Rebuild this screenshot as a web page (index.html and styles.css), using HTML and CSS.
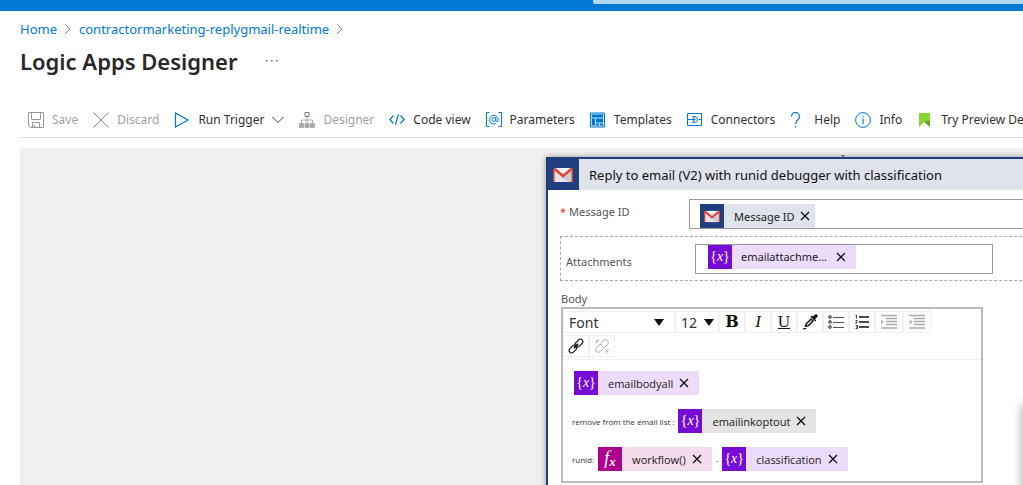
FILE: index.html
```html
<!DOCTYPE html>
<html lang="en">
<head>
  <meta charset="UTF-8">
  <meta name="viewport" content="width=device-width, initial-scale=1">
  <title>Logic Apps Designer</title>
  <link rel="stylesheet" href="styles.css">
</head>
<body>

  <!-- Shared icons -->
  <svg class="defs" aria-hidden="true">
    <symbol id="gmail" viewBox="0 0 20 16">
      <path d="M1 1h18v14H1z" fill="#e6e6e8"/>
      <path d="M10 9l8-7v13h-3l-6-5z" fill="#cdcdd0"/>
      <path d="M2 1h16l-8 7z" fill="#f5f5f5"/>
      <path d="M.8 15V2M19.200 15V2" stroke="#d5453a" stroke-width="1.600"/>
      <path d="M1 1.500l9 7.500 9-7.500" fill="none" stroke="#e0453a" stroke-width="2.600"/>
    </symbol>
    <symbol id="close" viewBox="0 0 10 10">
      <path d="M1 1l8 8M9 1L1 9" fill="none" stroke="#111" stroke-width="1.400"/>
    </symbol>
    <symbol id="chevron" viewBox="0 0 8 12">
      <path d="M1 1l5 5-5 5" fill="none" stroke="#888" stroke-width="1"/>
    </symbol>
  </svg>

  <header class="topbar">
    <input class="topbar-search" type="search" aria-label="Search resources">
  </header>

  <nav class="breadcrumb" aria-label="Breadcrumb">
    <a href="#">Home</a>
    <svg width="8" height="12"><use href="#chevron"/></svg>
    <a href="#">contractormarketing-replygmail-realtime</a>
    <svg width="8" height="12"><use href="#chevron"/></svg>
  </nav>

  <div class="title-row">
    <h1>Logic Apps Designer</h1>
    <button class="more" aria-label="More">
      <svg width="12" height="4" viewBox="0 0 12 4"><path d="M0 1h1.500v1.500H0zM5 1h1.500v1.500H5zM10 1h1.500v1.500H10z" fill="#666"/></svg>
    </button>
  </div>

  <div class="commands" role="toolbar" aria-label="Commands">
    <button disabled>
      <svg class="icon" viewBox="0 0 16 16" fill="none" stroke="#999"><path d="M.5.500h15v15h-13l-2-2zM3.500.500v7h9v-7M4.500 15.500v-5h7v5M6.500 13v2.500"/></svg>
      Save
    </button>
    <button disabled>
      <svg class="icon" viewBox="0 0 16 16" fill="none" stroke="#888"><path d="M.5.500l15 15M15.500.500l-15 15"/></svg>
      Discard
    </button>
    <button>
      <svg class="icon" viewBox="0 0 16 16" fill="none" stroke="#0078d4" stroke-width="1.200"><path d="M1.500 1v14L14 8z"/></svg>
      Run Trigger
      <svg width="12" height="8" viewBox="0 0 12 8" fill="none" stroke="#444"><path d="M.5 1L6 6.500 11.500 1"/></svg>
    </button>
    <button disabled>
      <svg class="icon" viewBox="0 0 16 16" fill="#aaa"><path d="M6 .5h4v4H6z" fill="none" stroke="#777"/><path d="M8 5v6M2.500 11V8h11v3" fill="none" stroke="#aaa"/><rect y="11" width="5" height="5" rx="1"/><rect x="5.500" y="11" width="5" height="5" rx="1"/><rect x="11" y="11" width="5" height="5" rx="1"/></svg>
      Designer
    </button>
    <button>
      <svg class="icon" viewBox="0 0 16 16" fill="none" stroke="#0078d4" stroke-width="1.200"><path d="M4.500 3.500L.800 7.500l3.700 4M11.500 3.500l3.700 4-3.700 4M9.500 2.500l-3 10"/></svg>
      Code view
    </button>
    <button>
      <svg class="icon" viewBox="0 0 16 16" fill="none" stroke="#0078d4"><path d="M3.500.500h-3v14h3M12.500.500h3v14h-3"/><circle cx="7.800" cy="7.500" r="1.900"/><path d="M9.800 5.200v3.300q0 1.200 1 1.200 1.400 0 1.400-2.400A4.300 4.300 0 1 0 10 11.500"/></svg>
      Parameters
    </button>
    <button>
      <svg class="icon" viewBox="0 0 16 16"><path d="M.5 1h14v14H.5z" fill="#c5e0f5" stroke="#0078d4"/><path d="M2 2.500h11v3H2zM2 6.500h3v7H2zM6 6.500h7v4H6zM6 11.500h3v2H6zM10 11.500h3v2h-3z" fill="#0078d4"/></svg>
      Templates
    </button>
    <button>
      <svg class="icon" viewBox="0 0 16 16" fill="none" stroke="#0078d4"><path d="M.5 1.500h14v12H.5zM.500 7.500h8M11.500 7.500h3M5 4.500h2.500a3 3 0 0 1 0 6H5M8 5.500a2 2 0 0 0-2 2 2 2 0 0 0 2 2"/></svg>
      Connectors
    </button>
    <button>
      <svg class="icon" viewBox="0 0 16 16" fill="none" stroke="#0078d4" stroke-width="1.200"><path d="M1.500 4.500a4 4 0 1 1 6.600 3Q5.500 9.500 5.500 12M5.500 14v1.500"/></svg>
      Help
    </button>
    <button>
      <svg class="icon" viewBox="0 0 16 16" fill="none" stroke="#0078d4"><circle cx="8" cy="8" r="7.400"/><path d="M8 6.500v5.500M8 4v1.300" stroke-width="1.200"/></svg>
      Info
    </button>
    <button>
      <svg class="icon" viewBox="0 0 16 16"><path d="M2 1h11v14l-5.500-5L2 15z" fill="#86d633"/><path d="M7.500 10L13 8v7z" fill="#5ea321"/></svg>
      Try Preview Designer
    </button>
  </div>

  <main class="canvas">
    <section class="card">
      <header class="card-header">
        <span class="card-icon"><svg width="20" height="16"><use href="#gmail"/></svg></span>
        <h2>Reply to email (V2) with runid debugger with classification</h2>
      </header>

      <div class="card-body">
        <div class="row">
          <label for="message-id"><span class="required">*</span>Message ID</label>
          <div class="field">
            <span class="token gmail">
              <span class="token-icon"><svg width="16" height="13"><use href="#gmail"/></svg></span>
              Message ID
              <button aria-label="Remove Message ID"><svg width="10" height="10"><use href="#close"/></svg></button>
            </span>
            <input id="message-id" type="text">
          </div>
        </div>

        <div class="row attachments">
          <label for="attachments">Attachments</label>
          <div class="field">
            <span class="token variable wide">
              <span class="token-icon">{<i>x</i>}</span>
              emailattachme...
              <button aria-label="Remove emailattachments"><svg width="10" height="10"><use href="#close"/></svg></button>
            </span>
            <input id="attachments" type="text">
          </div>
        </div>

        <div class="body-label" id="body-label">Body</div>
        <div class="editor">
          <div class="editor-tools" role="toolbar" aria-label="Formatting">
            <span class="select font-select">
              <select aria-label="Font"><option>Font</option></select>
            </span>
            <span class="select size-select">
              <select aria-label="Font size"><option>12</option></select>
            </span>
            <button class="bold" aria-label="Bold">B</button>
            <button class="italic" aria-label="Italic">I</button>
            <button class="underline" aria-label="Underline">U</button>
            <button aria-label="Text color">
              <svg class="icon" viewBox="0 0 16 16"><path d="M.5 15.500l1-1.500h3l-.5 1zM2.500 13l1-3.500L9 4l3 3-5.500 5.500zM8.500 2.500l1-1 1.500 1 2-2q1.500-.8 2.300.2t-.2 2.300l-2 2 1 1.500-1 1z" fill="#111"/><path d="M5 11l4.500-4.500" stroke="#fff" stroke-width="1.200"/></svg>
            </button>
            <button aria-label="Bulleted list">
              <svg class="icon" viewBox="0 0 16 16" fill="none" stroke="#222"><circle cx="2" cy="3" r="1.300"/><circle cx="2" cy="8" r="1.300"/><circle cx="2" cy="13" r="1.300"/><path d="M5 3.500h11M5 8.500h11M5 13.500h11" stroke="#555"/></svg>
            </button>
            <button aria-label="Numbered list">
              <svg class="icon" viewBox="0 0 16 16" fill="none" stroke="#111"><path d="M2.500 1v3.500M1.500 1.500h1M1.500 6.500h1.500v1.200L1.500 9h2M1.500 11.500h2v3h-2M2 13h1.500" stroke-width=".8"/><path d="M5 3h10M5 8h10M5 13h10" stroke-width="1.500"/></svg>
            </button>
            <button class="indent" disabled aria-label="Indent">
              <svg class="icon wide-icon" viewBox="0 0 18 16" fill="none" stroke="#aaa"><path d="M1 1.500h16M6 4.500h11M6 7.500h11M6 10.500h11M1 14h16" stroke-width="1.300"/><path d="M1 5.500l2.500 2.500L1 10.500z" fill="#aaa" stroke="none"/></svg>
            </button>
            <button class="indent" disabled aria-label="Outdent">
              <svg class="icon wide-icon" viewBox="0 0 18 16" fill="none" stroke="#aaa"><path d="M1 1.500h16M6 4.500h11M6 7.500h11M6 10.500h11M1 14h16" stroke-width="1.300"/><path d="M3.500 5.500L1 8l2.500 2.500z" fill="#aaa" stroke="none"/></svg>
            </button>
            <button aria-label="Link">
              <svg class="icon" viewBox="0 0 16 16" fill="none" stroke="#111" stroke-width="1.200"><rect x="-4.500" y="-2.500" width="9" height="5" rx="2.500" transform="translate(11 5) rotate(-45)"/><rect x="-4.500" y="-2.500" width="9" height="5" rx="2.500" transform="translate(5 11) rotate(-45)"/><path d="M6 10l4-4" stroke-width="1.800"/></svg>
            </button>
            <button disabled aria-label="Remove link">
              <svg class="icon" viewBox="0 0 16 16" fill="none" stroke="#aaa"><path d="M7 5l2.500-2.500a2.500 2.500 0 0 1 4 4L11 9a2.500 2.500 0 0 1-3 0M9 11l-2.500 2.500a2.500 2.500 0 0 1-4-4L5 7a2.500 2.500 0 0 1 3 0M1 4l2 1M4 1l1 2M2 2l2 2M12 13l1 2M13 11l2 1M12 12l2 2"/></svg>
            </button>
          </div>

          <div class="editor-content" contenteditable="true" role="textbox" aria-labelledby="body-label" spellcheck="false">
            <p>
              <span class="token variable">
                <span class="token-icon">{<i>x</i>}</span>
                emailbodyall
                <button aria-label="Remove emailbodyall"><svg width="10" height="10"><use href="#close"/></svg></button>
              </span>
            </p>
            <p>
              remove from the email list :
              <span class="token variable muted">
                <span class="token-icon">{<i>x</i>}</span>
                emailinkoptout
                <button aria-label="Remove emailinkoptout"><svg width="10" height="10"><use href="#close"/></svg></button>
              </span>
            </p>
            <p>
              runid:
              <span class="token function">
                <span class="token-icon"><i>f<sub>x</sub></i></span>
                workflow()
                <button aria-label="Remove workflow()"><svg width="10" height="10"><use href="#close"/></svg></button>
              </span>
              -
              <span class="token variable">
                <span class="token-icon">{<i>x</i>}</span>
                classification
                <button aria-label="Remove classification"><svg width="10" height="10"><use href="#close"/></svg></button>
              </span>
            </p>
          </div>
        </div>
      </div>
    </section>
  </main>

  <aside class="zoom-panel"></aside>

</body>
</html>
```
FILE: styles.css
```css
* { box-sizing: border-box; margin: 0; padding: 0; }

body {
  height: 100vh;
  display: flex;
  flex-direction: column;
  overflow: hidden;
  background: #fff;
  color: #323130;
  font-family: "Noto Sans", "Open Sans", sans-serif;
  font-size: 12px;
}

button,
input,
select {
  font: inherit;
  color: inherit;
  background: none;
  border: none;
  outline: none;
}
svg { display: block; flex: none; }
.defs { position: absolute; width: 0; height: 0; }
.icon { width: 16px; height: 16px; }
.wide-icon { width: 18px; }

/* Portal header */
.topbar {
  flex: none;
  height: 11px;
  padding-left: 58%;
  background: #0078d4;
}
.topbar-search {
  display: block;
  width: 100%;
  height: 4px;
  border-radius: 0 0 0 2px;
  background: #b3d6f2;
}

.breadcrumb {
  display: flex;
  align-items: center;
  gap: 7px;
  padding: 8px 20px 0;
  font-size: 13px;
  line-height: 20px;
}
.breadcrumb a { color: #0078d4; text-decoration: none; }

.title-row {
  display: flex;
  align-items: center;
  gap: 28px;
  padding: 6px 20px 0;
}
h1 {
  font-size: 22px;
  line-height: 32px;
  font-weight: 600;
  color: #292827;
}

/* Command bar */
.commands {
  display: flex;
  flex: none;
  align-items: center;
  gap: 15px;
  height: 36px;
  margin: 25px 0 10px 20px;
  padding-left: 8px;
  border-bottom: 1px solid #dcdcdc;
  overflow: hidden;
  white-space: nowrap;
}
.commands button {
  display: flex;
  flex: none;
  align-items: center;
  gap: 8px;
}
.commands button:disabled { color: #a19f9d; }

/* Designer canvas */
.canvas {
  flex: 1;
  min-height: 0;
  margin-left: 20px;
  padding: 9px 0 0 526px;
  background: #f0f0f0;
  overflow: hidden;
}
.card {
  position: relative;
  width: 620px;
  border: 2px solid #1f3f7f;
  background: #fff;
  box-shadow: 0 0 6px rgba(0, 0, 0, 0.4);
}
/* Tip of the connector that enters the card */
.card::before {
  content: "";
  position: absolute;
  top: -4px;
  left: 293px;
  border: 2px solid transparent;
  border-top-color: #555;
  border-bottom: 0;
}
.card-header {
  display: flex;
  align-items: center;
  height: 31px;
  background: #dfe3ec;
}
.card-icon {
  display: grid;
  place-items: center;
  width: 31px;
  height: 31px;
  padding-right: 2px;
  background: #1f3f7f;
}
h2 {
  padding-left: 10px;
  color: #111;
  font-size: 13px;
  font-weight: 400;
}

.card-body { padding: 9px 12px 24px; font-size: 11px; }
.row {
  display: flex;
  color: #555;
}
.row label { width: 129px; padding-top: 5px; }
.required { color: #e03030; padding-right: 3px; }
.field {
  display: flex;
  flex: 1;
  height: 30px;
  padding: 4px 0 0 10px;
  border: 1px solid #999;
}
.field input { flex: 1; min-width: 0; }
.attachments {
  align-items: center;
  height: 45px;
  margin-top: 7px;
  padding-left: 5px;
  border: 1px dashed #aaa;
}
.attachments .field { flex: none; width: 298px; padding: 0 0 0 12px; }

/* Tokens */
.token {
  display: inline-flex;
  align-items: center;
  gap: 6px;
  height: 24px;
  padding-right: 5px;
  color: #222;
  font-size: 11px;
}
.token-icon {
  display: flex;
  align-items: center;
  justify-content: center;
  width: 24px;
  height: 24px;
  margin-right: 4px;
  color: #fff;
  font-family: "Liberation Serif", serif;
  font-size: 14px;
}
.token button { width: 10px; height: 10px; }
.gmail { background: #dfe3ec; }
.gmail .token-icon { background: #1f3f7f; }
.variable { padding-right: 10px; background: #ecdcf9; }
.variable .token-icon { background: #770bd6; }
.variable.muted { background: #e4e4e4; }
.function { padding-right: 10px; background: #f4dcec; }
.function .token-icon { background: #ad008c; font-size: 18px; }
.function sub { font-size: 13px; font-weight: bold; vertical-align: -2px; }
.wide { gap: 9px; }
.wide .token-icon { margin-right: 0; }

/* Rich text editor */
.body-label {
  padding: 10px 0 0 1px;
  line-height: 16px;
  color: #555;
}
.editor {
  width: 422px;
  margin-left: 1px;
  border: 2px solid #bbb;
}
.editor-tools {
  display: flex;
  flex-wrap: wrap;
  row-gap: 2px;
  padding: 2px 40px 2px 0;
  border-bottom: 1px solid #f1f1f1;
}
.editor-tools button,
.select {
  display: grid;
  place-items: center;
  width: 26px;
  height: 22px;
  border: 1px solid #f1f1f1;
}
.editor-tools button { color: #111; font-family: "Liberation Serif", serif; font-size: 17px; line-height: 20px; }
.editor-tools .bold { font-family: "DejaVu Serif", serif; font-size: 16px; font-weight: bold; }
.editor-tools .indent { width: 28px; }
.italic { font-style: italic; }
.underline { text-decoration: underline; }
.select { position: relative; font-size: 14px; }
.select select { width: 100%; height: 20px; padding-left: 5px; appearance: none; }
.select::after {
  content: "";
  position: absolute;
  top: 7px;
  right: 4px;
  border: 5px solid transparent;
  border-top: 7px solid #111;
  border-bottom: 0;
  pointer-events: none;
}
.font-select { width: 112px; }
.font-select::after { right: 10px; }
.size-select { width: 44px; }

.editor-content {
  padding: 11px 9px 10px;
  font-family: "Open Sans", sans-serif;
  font-size: 8px;
  outline: none;
}
.editor-content p {
  display: flex;
  align-items: center;
  gap: 4px;
  height: 24px;
  margin-bottom: 14px;
}
.editor-content p:first-child { padding-left: 2px; }
.editor-content p:last-child { margin-bottom: 0; }

/* Floating zoom controls, mostly past the right edge */
.zoom-panel {
  position: fixed;
  right: -40px;
  bottom: -20px;
  width: 40px;
  height: 100px;
  background: #fff;
  box-shadow: 0 0 10px rgba(0, 0, 0, 0.4);
}
```
